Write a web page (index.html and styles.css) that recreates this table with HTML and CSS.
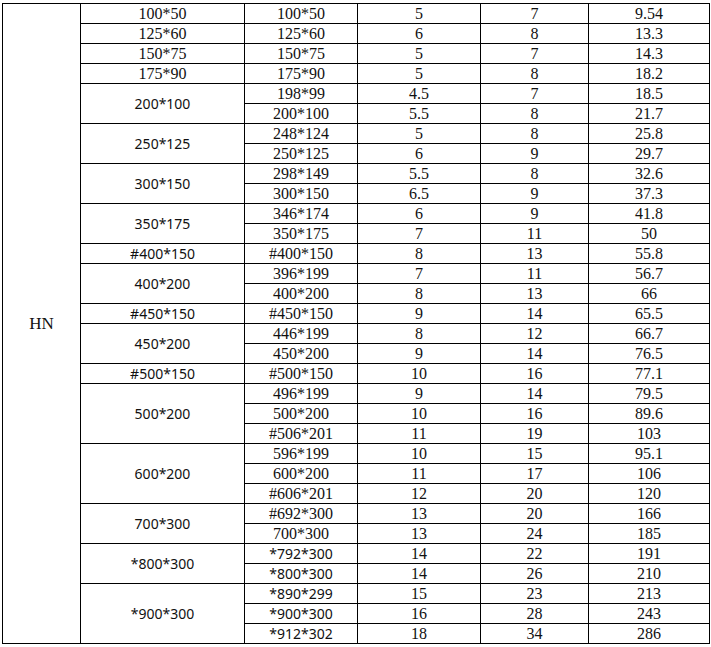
FILE: index.html
```html
<!DOCTYPE html>
<html>
<head>
<meta charset="utf-8">
<link rel="stylesheet" href="styles.css">
</head>
<body>
<table class="spec">
<colgroup>
<col class="c1"><col class="c2"><col class="c3"><col class="c4"><col class="c5"><col class="c6">
</colgroup>
<tbody>
<tr><td rowspan="32" class="type">HN</td><td>100*50</td><td>100*50</td><td>5</td><td>7</td><td>9.54</td></tr>
<tr><td>125*60</td><td>125*60</td><td>6</td><td>8</td><td>13.3</td></tr>
<tr><td>150*75</td><td>150*75</td><td>5</td><td>7</td><td>14.3</td></tr>
<tr><td>175*90</td><td>175*90</td><td>5</td><td>8</td><td>18.2</td></tr>
<tr><td rowspan="2" class="sans">200*100</td><td>198*99</td><td>4.5</td><td>7</td><td>18.5</td></tr>
<tr><td>200*100</td><td>5.5</td><td>8</td><td>21.7</td></tr>
<tr><td rowspan="2" class="sans">250*125</td><td>248*124</td><td>5</td><td>8</td><td>25.8</td></tr>
<tr><td>250*125</td><td>6</td><td>9</td><td>29.7</td></tr>
<tr><td rowspan="2" class="sans">300*150</td><td>298*149</td><td>5.5</td><td>8</td><td>32.6</td></tr>
<tr><td>300*150</td><td>6.5</td><td>9</td><td>37.3</td></tr>
<tr><td rowspan="2" class="sans">350*175</td><td>346*174</td><td>6</td><td>9</td><td>41.8</td></tr>
<tr><td>350*175</td><td>7</td><td>11</td><td>50</td></tr>
<tr><td class="sans">#400*150</td><td>#400*150</td><td>8</td><td>13</td><td>55.8</td></tr>
<tr><td rowspan="2" class="sans">400*200</td><td>396*199</td><td>7</td><td>11</td><td>56.7</td></tr>
<tr><td>400*200</td><td>8</td><td>13</td><td>66</td></tr>
<tr><td class="sans">#450*150</td><td>#450*150</td><td>9</td><td>14</td><td>65.5</td></tr>
<tr><td rowspan="2" class="sans">450*200</td><td>446*199</td><td>8</td><td>12</td><td>66.7</td></tr>
<tr><td>450*200</td><td>9</td><td>14</td><td>76.5</td></tr>
<tr><td class="sans">#500*150</td><td>#500*150</td><td>10</td><td>16</td><td>77.1</td></tr>
<tr><td rowspan="3" class="sans">500*200</td><td>496*199</td><td>9</td><td>14</td><td>79.5</td></tr>
<tr><td>500*200</td><td>10</td><td>16</td><td>89.6</td></tr>
<tr><td>#506*201</td><td>11</td><td>19</td><td>103</td></tr>
<tr><td rowspan="3" class="sans">600*200</td><td>596*199</td><td>10</td><td>15</td><td>95.1</td></tr>
<tr><td>600*200</td><td>11</td><td>17</td><td>106</td></tr>
<tr><td>#606*201</td><td>12</td><td>20</td><td>120</td></tr>
<tr><td rowspan="2" class="sans">700*300</td><td>#692*300</td><td>13</td><td>20</td><td>166</td></tr>
<tr><td>700*300</td><td>13</td><td>24</td><td>185</td></tr>
<tr><td rowspan="2" class="sans">*800*300</td><td class="sans">*792*300</td><td>14</td><td>22</td><td>191</td></tr>
<tr><td class="sans">*800*300</td><td>14</td><td>26</td><td>210</td></tr>
<tr><td rowspan="3" class="sans">*900*300</td><td class="sans">*890*299</td><td>15</td><td>23</td><td>213</td></tr>
<tr><td class="sans">*900*300</td><td>16</td><td>28</td><td>243</td></tr>
<tr><td class="sans">*912*302</td><td>18</td><td>34</td><td>286</td></tr>
</tbody>
</table>
</body>
</html>
```
FILE: styles.css
```css
html, body {
  margin: 0;
  padding: 0;
  background: #fff;
}
.spec {
  margin: 3px 0 0 2px;
  border-collapse: collapse;
  table-layout: fixed;
  width: 707px;
  font-family: "Liberation Serif", "Times New Roman", serif;
  font-size: 16px;
  color: #111;
}
.c1 { width: 78px; }
.c2 { width: 164px; }
.c3 { width: 113px; }
.c4 { width: 123px; }
.c5 { width: 108px; }
.c6 { width: 121px; }
.spec td {
  border: 1px solid #000;
  height: 19px;
  padding: 0;
  line-height: 19px;
  text-align: center;
  vertical-align: middle;
  white-space: nowrap;
}
.spec tr { height: 20px; }
.spec td.sans {
  font-family: "Noto Sans", "Liberation Sans", sans-serif;
  font-size: 14px;
}
.spec td.type {
  font-size: 17px;
}
```
